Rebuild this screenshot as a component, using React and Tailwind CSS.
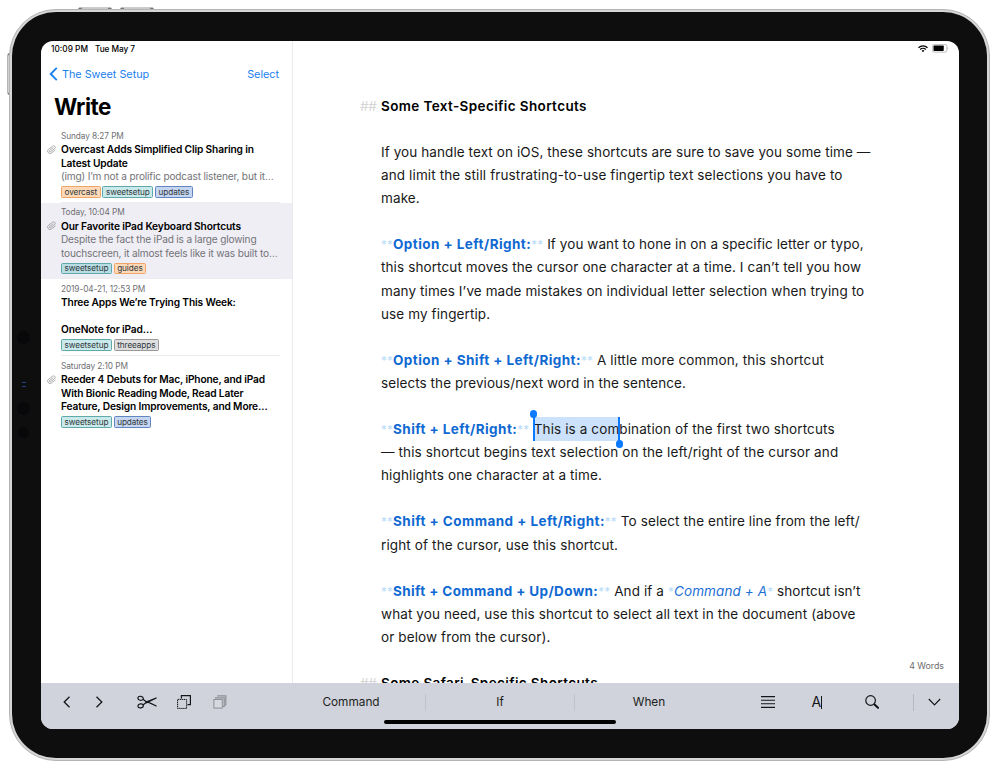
import React from "react";

const Mark = ({ children }) => (
  <span className="text-[11.8px] font-normal not-italic tracking-[0.1px] text-[#b9dbf8]">{children}</span>
);

const Key = ({ children, tight }) => (
  <>
    <Mark>**</Mark>
    <span className={`font-bold text-[#0f69d2] ${tight ? "tracking-[0.38px]" : "tracking-[0.44px]"}`}>{children}</span>
    <Mark>**</Mark>{" "}
  </>
);

const Selection = ({ children }) => (
  <span className="relative -top-px ml-[0.6px] inline-block h-[24px] bg-[#cce2fc] align-top leading-[25.1px]">
    {children}
    <span className="absolute -left-px top-0 h-[24px] w-[2px] bg-[#0a7aff]" />
    <span className="absolute -left-[4px] -top-[7px] size-[7.5px] rounded-full bg-[#0a7aff]" />
    <span className="absolute -right-px top-0 h-[24px] w-[2px] bg-[#0a7aff]" />
    <span className="absolute -right-[4px] top-[23px] size-[7.5px] rounded-full bg-[#0a7aff]" />
  </span>
);

const Heading = ({ children }) => (
  <div className="-ml-[21px] flex h-[23.1px] whitespace-nowrap font-semibold tracking-[0.38px] text-black">
    <span className="w-[21px] font-normal tracking-[-0.3px] text-[#d5d5d5]">##</span>
    {children}
  </div>
);

const lines = [
  <span className="tracking-[0.09px]">If you handle text on iOS, these shortcuts are sure to save you some time —</span>,
  <span className="tracking-[0.125px]">and limit the still frustrating-to-use fingertip text selections you have to</span>,
  <>make.</>,
  null,
  <><Key>Option + Left/Right:</Key><span className="tracking-[0.08px]">If you want to hone in on a specific letter or typo,</span></>,
  <>this shortcut moves the cursor one character at a time. I can’t tell you how</>,
  <span className="tracking-[0.09px]">many times I’ve made mistakes on individual letter selection when trying to</span>,
  <>use my fingertip.</>,
  null,
  <><Key>Option + Shift + Left/Right:</Key><span className="tracking-[0.14px]">A little more common, this shortcut</span></>,
  <span className="tracking-[0.07px]">selects the previous/next word in the sentence.</span>,
  null,
  <><Key>Shift + Left/Right:</Key><Selection>This is a com</Selection>bination of the first two shortcuts</>,
  <span className="tracking-[0.13px]">— this shortcut begins text selection on the left/right of the cursor and</span>,
  <span className="tracking-[0.13px]">highlights one character at a time.</span>,
  null,
  <><Key>Shift + Command + Left/Right:</Key>To select the entire line from the left/</>,
  <span className="tracking-[0.13px]">right of the cursor, use this shortcut.</span>,
  null,
  <>
    <Key tight>Shift + Command + Up/Down:</Key>And if a <Mark>*</Mark>
    <span className="italic text-[#1c6fd4]">Command + A</span><Mark>*</Mark><span className="tracking-[0.04px]"> shortcut isn’t</span>
  </>,
  <>what you need, use this shortcut to select all text in the document (above</>,
  <>or below from the cursor).</>,
  null,
];

const tagColors = {
  orange: "border-[#f0a567] bg-[#fdd9b8]",
  teal: "border-[#5fa9ab] bg-[#c9e9ea]",
  tealDim: "border-[#5fa9ab] bg-[#b8dde2]",
  blue: "border-[#6286c3] bg-[#c6d6f0]",
  gray: "border-[#999] bg-[#dedede]",
};

const Tag = ({ color, children }) => (
  <span className={`flex h-[11.5px] items-center rounded-[1.5px] border px-[2.5px] text-[8.2px] leading-none tracking-[-0.08px] text-[#2f383d] ${tagColors[color]}`}>
    {children}
  </span>
);

const Clip = () => (
  <svg viewBox="0 0 24 24" className="mt-[18.5px] ml-px size-[9.5px] rotate-[8deg] fill-none stroke-[#8c8c8c] stroke-[1.7]">
    <path d="M21.4 11 12.3 20.2a6 6 0 0 1-8.5-8.5L13 2.6a4 4 0 0 1 5.7 5.7l-9.2 9.2a2 2 0 0 1-2.8-2.8l8.5-8.5" />
  </svg>
);

const Note = ({ date, title, preview = [], tags, clip, active, last }) => (
  <div className={`flex h-[76.7px] pl-[5px] ${active ? "bg-[#efeef5]" : ""}`}>
    <div className="w-[15px] shrink-0">{clip && <Clip />}</div>
    <div className={`flex w-[219px] flex-col whitespace-nowrap ${last ? "" : "border-b border-[#ececee]"}`}>
      <div className="mt-[3.5px] h-[13.5px] text-[8.3px] leading-[13.5px] tracking-[-0.1px] text-[#6f6f73]">{date}</div>
      {title.map((t, i) => (
        <div key={i} className="h-[13.5px] text-[10.2px] font-semibold leading-[13.5px] tracking-[-0.14px] text-black">{t}</div>
      ))}
      {preview.map((t, i) => (
        <div key={i} className="h-[13.5px] text-[10.1px] leading-[13.5px] tracking-[-0.17px] text-[#737378]">{t}</div>
      ))}
      <div className="mt-[2.5px] flex gap-[1.8px]">
        {tags.map(([c, t]) => <Tag key={t} color={c}>{t}</Tag>)}
      </div>
    </div>
  </div>
);

const Sidebar = () => (
  <aside className="flex w-[252px] flex-col border-r border-[#ebebeb]">
    <div className="flex h-[16px] items-center gap-[7px] pl-[10px] text-[8.3px] font-medium text-black">
      <span>10:09 PM</span>
      <span className="tracking-[-0.1px]">Tue May 7</span>
    </div>
    <div className="flex h-[35px] items-center pl-[8px] pr-[13px] pt-px text-[10.8px] text-[#1a80ee]">
      <svg viewBox="0 0 9 15" className="mr-[4px] mb-[2px] h-[14px] w-[9px] fill-none stroke-current stroke-2">
        <path d="M8 1 1.5 7.5 8 14" />
      </svg>
      <span>The Sweet Setup</span>
      <span className="ml-auto">Select</span>
    </div>
    <div className="flex h-[34px] items-center pb-[4px] pl-[13px] text-[22.5px] font-bold tracking-[-0.5px] text-black">Write</div>
    <Note
      clip
      date="Sunday 8:27 PM"
      title={["Overcast Adds Simplified Clip Sharing in", "Latest Update"]}
      preview={["(img) I’m not a prolific podcast listener, but it…"]}
      tags={[["orange", "overcast"], ["teal", "sweetsetup"], ["blue", "updates"]]}
    />
    <Note
      clip
      active
      date="Today, 10:04 PM"
      title={["Our Favorite iPad Keyboard Shortcuts"]}
      preview={["Despite the fact the iPad is a large glowing", "touchscreen, it almost feels like it was built to…"]}
      tags={[["tealDim", "sweetsetup"], ["orange", "guides"]]}
    />
    <Note
      date="2019-04-21, 12:53 PM"
      title={["Three Apps We’re Trying This Week:", "", "OneNote for iPad…"]}
      tags={[["teal", "sweetsetup"], ["gray", "threeapps"]]}
    />
    <Note
      clip
      last
      date="Saturday 2:10 PM"
      title={["Reeder 4 Debuts for Mac, iPhone, and iPad", "With Bionic Reading Mode, Read Later", "Feature, Design Improvements, and More…"]}
      tags={[["teal", "sweetsetup"], ["blue", "updates"]]}
    />
  </aside>
);

const StatusIcons = () => (
  <div className="absolute right-[10px] top-[3px] flex items-center gap-[4px]">
    <svg viewBox="0 0 20 15" className="h-[7.5px] w-[10px] fill-none stroke-black stroke-[2.6]">
      <path d="M1 5.6a12.8 12.8 0 0 1 18 0" />
      <path d="M4.4 9a8 8 0 0 1 11.2 0" />
      <path d="M7.2 11.3a4 4 0 0 1 5.6 0L10 14.3z" className="fill-black stroke-none" />
    </svg>
    <svg viewBox="0 0 34 17" className="h-[8.5px] w-[17px]">
      <rect x="0.8" y="0.8" width="29" height="15.4" rx="4" className="fill-none stroke-[#a3a3a3] stroke-[1.4]" />
      <rect x="3" y="3" width="20.5" height="11" rx="1.5" className="fill-black" />
      <path d="M31.5 5.5q2.5 3 0 6z" className="fill-[#999]" />
    </svg>
  </div>
);

const icon = "fill-none stroke-[#15161a]";

const Toolbar = () => (
  <div className="flex h-[46px] shrink-0 bg-[#d0d3db] text-[11.8px] text-[#1d1e22]">
    <div className="flex h-[38px] w-[236px] items-center pl-[22px]">
      <svg viewBox="0 0 8 12" className={`h-[12px] w-[8px] stroke-[1.3] ${icon}`}><path d="M6.5.8 1.2 6l5.3 5.2" /></svg>
      <svg viewBox="0 0 8 12" className={`ml-[24px] h-[12px] w-[8px] stroke-[1.3] ${icon}`}><path d="M1.5.8 6.8 6l-5.3 5.2" /></svg>
      <svg viewBox="0 0 20 14" className={`ml-[34px] h-[14px] w-[20px] stroke-[1.2] ${icon}`}>
        <ellipse cx="3.6" cy="3.3" rx="2.7" ry="2" transform="rotate(10 3.6 3.3)" />
        <ellipse cx="3.6" cy="10.9" rx="2.7" ry="2" transform="rotate(-10 3.6 10.9)" />
        <path d="M6 4.3 9.5 6.9M6 9.9l3.5-2.6" />
        <path d="M8.2 6.8 19.5 2.2 19.6 3.5 9.4 8.4zM8.2 6.6l1.6-.8 9.8 4.7-.1 1.3z" className="fill-[#15161a] stroke-none" />
      </svg>
      <svg viewBox="0 0 14 14" className={`ml-[20px] size-[14px] ${icon}`}>
        <rect x="0.6" y="4.4" width="9" height="9" className="stroke-1" strokeDasharray="1.4 .6" />
        <path d="M4.4 3.5V.7h9v9H10.500" className="stroke-[1.2]" />
      </svg>
      <svg viewBox="0 0 14 14" className="ml-[22px] size-[14px] fill-none stroke-[#8e9096]">
        <rect x="0.9" y="4.5" width="8.4" height="8.6" className="fill-[#d6d8df] stroke-1" />
        <path d="M2.6 3.6V2.8h8.6v8.6H10" className="stroke-[1.2]" />
        <path d="M4.8 1.6V.9h8v9h-.8" className="stroke-[1.2]" />
      </svg>
    </div>
    <div className="flex h-[40px] w-[446px] items-center">
      <span className="w-[148px] text-center">Command</span>
      <span className="mb-[2px] h-[17px] w-px bg-[#c0c3cb]" />
      <span className="w-[148px] text-center">If</span>
      <span className="mb-[2px] h-[17px] w-px bg-[#c0c3cb]" />
      <span className="w-[148px] text-center">When</span>
    </div>
    <div className="flex h-[38px] grow items-center pl-[38px]">
      <svg viewBox="0 0 14 12" className={`h-[12px] w-[14px] stroke-[1.1] ${icon}`}><path d="M0 .6h14M0 4.2h14M0 7.8h14M0 11.4h14" /></svg>
      <span className="ml-[36.5px] flex w-[11px] items-center text-[14px] leading-none text-[#15161a]">
        A<span className="-ml-[0.5px] h-[13px] w-px shrink-0 bg-[#15161a]" />
      </span>
      <svg viewBox="0 0 14 14" className={`ml-[42.5px] size-[14px] ${icon}`}>
        <circle cx="5.6" cy="5.5" r="4.8" className="stroke-[1.2]" />
        <path d="m9 9 1.6 1.6" className="stroke-[1.2]" />
        <path d="m9.8 9.8 3.2 3" className="stroke-[2.1]" strokeLinecap="round" />
      </svg>
      <span className="ml-[34px] h-[17px] w-px bg-[#b4b7bf]" />
      <svg viewBox="0 0 13 8" className={`ml-[14px] h-[8px] w-[13px] stroke-[1.2] ${icon}`}><path d="m.8 1 5.7 5.8L12.200 1" /></svg>
    </div>
  </div>
);

export default function App() {
  return (
    <div className="relative h-[770px] w-[1000px] overflow-hidden bg-white p-[9px] font-[Inter,sans-serif]">
      <div className="absolute left-[78px] top-[7px] h-[3px] w-[34px] rounded-t-sm border-x-4 border-t border-x-[#777] border-t-[#ccc] bg-[#c9c9c9]" />
      <div className="absolute left-[120px] top-[7px] h-[3px] w-[34px] rounded-t-sm border-x-4 border-t border-x-[#777] border-t-[#ccc] bg-[#c9c9c9]" />
      <div className="absolute left-[7px] top-[53px] h-[42px] w-[3px] rounded-l-sm border-y-2 border-l border-y-[#777] border-l-[#b5b5b5] bg-[#d0d0d0]" />
      <div className="relative h-[752px] w-[981px] rounded-[47px] border border-[#b4b4b4] bg-[#d6d6d6] p-[2px]">
        <div className="relative h-full rounded-[44px] bg-[#0e0e0e] p-[29px]">
          <div className="absolute left-[5px] top-[319px] size-[13px] rounded-full bg-[#08080a]" />
          <div className="absolute left-[10px] top-[370px] h-[5px] w-[4px] border-y border-[#213f7c]" />
          <div className="absolute left-[5px] top-[390px] size-[13px] rounded-full bg-[#08080a]" />
          <div className="absolute left-[6px] top-[415px] size-[11px] rounded-full bg-[#08080a]" />
          <div className="relative flex h-[688px] w-[918px] flex-col overflow-hidden rounded-[12px] bg-white">
            <div className="flex h-[642px]">
              <Sidebar />
              <main className="h-full overflow-hidden pl-[88px] pt-[53.8px] text-[13.5px] leading-[23.1px] tracking-[0.11px] text-[#191919]">
                <div className="-ml-[21px] w-[530px] pl-[21px]">
                  <Heading>Some Text-Specific Shortcuts</Heading>
                  <div className="h-[23.1px]" />
                  {lines.map((l, i) => <div key={i} className="h-[23.1px] whitespace-nowrap">{l}</div>)}
                  <Heading>Some Safari-Specific Shortcuts</Heading>
                </div>
              </main>
            </div>
            <Toolbar />
            <StatusIcons />
            <div className="absolute bottom-[57px] right-[15px] text-[8.8px] leading-[12px] text-[#6b6b6b]">4 Words</div>
            <div className="absolute bottom-[5px] left-[343px] h-[4px] w-[232px] rounded-full bg-black" />
          </div>
        </div>
      </div>
    </div>
  );
}
